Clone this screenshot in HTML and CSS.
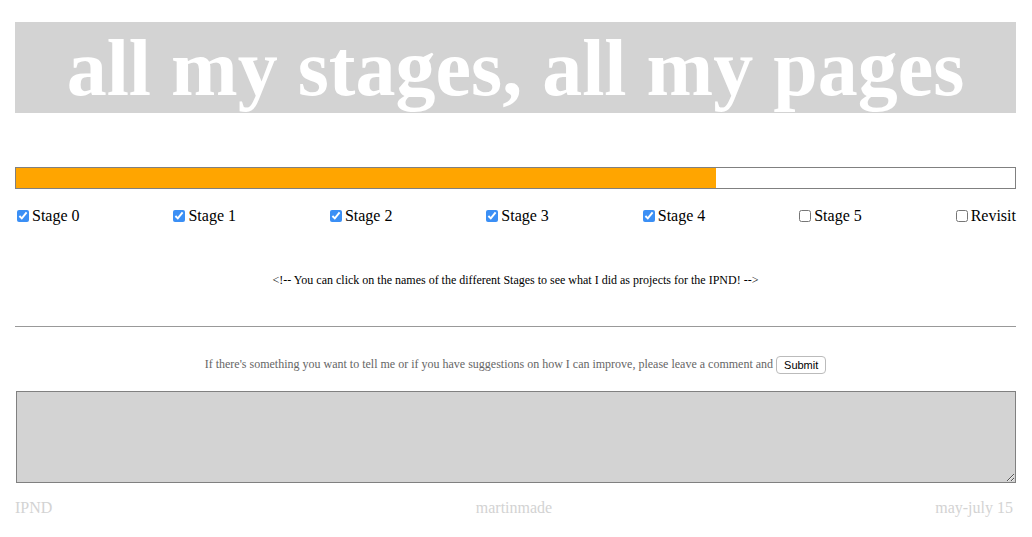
FILE: index.html
```html
<!DOCTYPE html>
<html>
<head>
<meta charset="utf-8">
<link rel="stylesheet" href="styles.css">
</head>
<body>
<div class="page">
  <header class="banner"><h1 class="title">all my stages, all my pages</h1></header>
  <div class="progress"><div class="progress-fill" style="width:70.1%"></div></div>
  <div class="stages">
    <label class="stage"><input type="checkbox" checked>Stage 0</label>
    <label class="stage"><input type="checkbox" checked>Stage 1</label>
    <label class="stage"><input type="checkbox" checked>Stage 2</label>
    <label class="stage"><input type="checkbox" checked>Stage 3</label>
    <label class="stage"><input type="checkbox" checked>Stage 4</label>
    <label class="stage"><input type="checkbox">Stage 5</label>
    <label class="stage"><input type="checkbox">Revisit</label>
  </div>
  <p class="note">&lt;!-- You can click on the names of the different Stages to see what I did as projects for the IPND! --&gt;</p>
  <hr class="rule">
  <p class="ask">If there's something you want to tell me or if you have suggestions on how I can improve, please leave a comment and <button class="submit">Submit</button></p>
  <textarea class="comment"></textarea>
  <footer class="footer"><span class="f-left">IPND</span><span class="f-mid">martinmade</span><span class="f-right">may-july 15</span></footer>
</div>
</body>
</html>
```

FILE: styles.css
```css
html, body { margin: 0; padding: 0; background: #fff; }
body { font-family: "Liberation Serif", "Times New Roman", serif; color: #000; }
.page { padding: 22px 16px 0 15px; }
.banner { background: #d3d3d3; height: 91px; display: flex; align-items: center; justify-content: center; }
.title { margin: 0; color: #fff; font-weight: bold; font-size: 80px; line-height: 1; letter-spacing: 0; }
.progress { margin-top: 54px; height: 20px; border: 1px solid #808080; background: #fff; }
.progress-fill { height: 100%; background: #ffa500; }
.stages { display: flex; justify-content: space-between; margin-top: 17px; font-size: 16px; line-height: 20px; }
.stage { display: flex; align-items: center; }
.stage input { margin: 0 3px 0 2px; width: 12px; height: 12px; accent-color: #3b8ff5; }
.note { text-align: center; font-size: 12px; margin: 46px 0 0; line-height: 16px; }
.rule { border: 0; border-top: 1px solid #999; margin: 38px 0 0; height: 0; }
.ask { text-align: center; color: #666; font-size: 12px; margin: 27px 0 0; line-height: 20px; }
.submit { font-family: "Liberation Sans", Arial, sans-serif; font-size: 11px; background: #fff; border: 1px solid #bbb; border-radius: 4px; padding: 2px 7px; color: #000; vertical-align: middle; }
.comment { display: block; box-sizing: border-box; width: 1000px; height: 92px; margin: 17px 0 0 1px; background: #d3d3d3; border: 1px solid #808080; resize: both; }
.footer { display: grid; grid-template-columns: 1fr 1fr 1fr; color: #d3d3d3; font-size: 16px; margin: 16px 3px 0 0; line-height: 18px; }
.f-mid { text-align: center; }
.f-right { text-align: right; }
```
